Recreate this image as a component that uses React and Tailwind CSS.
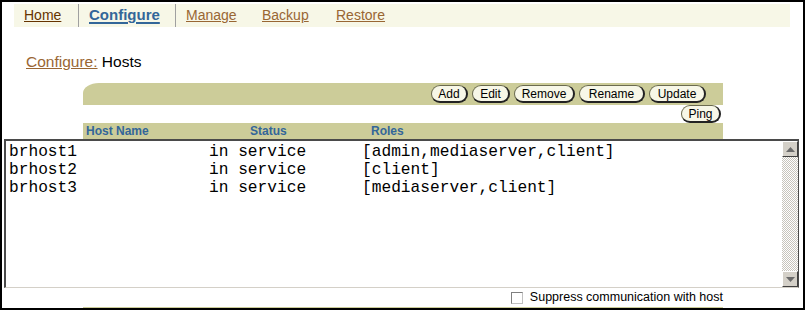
import React from "react";

const hosts = [
  { name: "brhost1", status: "in service", roles: "[admin,mediaserver,client]" },
  { name: "brhost2", status: "in service", roles: "[client]" },
  { name: "brhost3", status: "in service", roles: "[mediaserver,client]" },
];

function PillButton({ label, width }) {
  return (
    <button
      className={`h-[18px] ${width} rounded-full bg-[#f7f7e7] border border-[#6b6b4f] border-r-2 border-b-2 border-r-[#222] border-b-[#222] text-[12px] leading-[14px] text-black flex items-center justify-center`}
    >
      {label}
    </button>
  );
}

function ScrollArrow({ up }) {
  return (
    <div className="w-[16px] h-[16px] bg-[#d4d0c8] border border-t-white border-l-white border-r-[#404040] border-b-[#404040] flex items-center justify-center">
      <svg width="9" height="5" viewBox="0 0 9 5">
        {up ? (
          <polygon points="4.5,0 9,5 0,5" fill="#6a6a6a" />
        ) : (
          <polygon points="0,0 9,0 4.5,5" fill="#6a6a6a" />
        )}
      </svg>
    </div>
  );
}

export default function App() {
  return (
    <div className="w-[805px] h-[310px] border-2 border-black bg-white overflow-hidden font-['Liberation_Sans',Arial,sans-serif] flex flex-col">
      {/* Tab bar */}
      <div className="mt-[2px] ml-[12px] w-[776px] h-[23px] bg-[#f7f7e7] flex items-stretch">
        <span className="ml-[10px] w-[54px] flex items-center text-[14px] text-[#663300] underline">
          Home
        </span>
        <span className="w-px bg-[#a0a0a0]" />
        <span className="ml-[10px] w-[86px] flex items-center text-[15px] font-bold text-[#336699] underline decoration-2 underline-offset-2">
          Configure
        </span>
        <span className="w-px bg-[#a0a0a0]" />
        <span className="ml-[10px] w-[76px] flex items-center text-[14px] text-[#996633] underline">
          Manage
        </span>
        <span className="w-[74px] flex items-center text-[14px] text-[#996633] underline">
          Backup
        </span>
        <span className="flex items-center text-[14px] text-[#996633] underline">
          Restore
        </span>
      </div>

      {/* Breadcrumb */}
      <div className="mt-[25px] ml-[24px] h-[20px] leading-[20px] text-[15.5px]">
        <span className="text-[#996633] underline">Configure:</span>
        <span className="text-black"> Hosts</span>
      </div>

      {/* Action bar */}
      <div className="mt-[11px] ml-[81px] w-[640px]">
        <div className="h-[22px] bg-[#cccc99] rounded-tl-[16px_10px] flex items-center justify-end gap-[4px] pr-[17px]">
          <PillButton label="Add" width="w-[37px]" />
          <PillButton label="Edit" width="w-[38px]" />
          <PillButton label="Remove" width="w-[61px]" />
          <PillButton label="Rename" width="w-[66px]" />
          <PillButton label="Update" width="w-[57px]" />
        </div>
        <div className="h-[18px] flex items-end justify-end pr-[2px]">
          <PillButton label="Ping" width="w-[40px]" />
        </div>
        <div className="h-[16px] bg-[#cccc99] flex items-center pl-[3px] text-[12px] font-bold text-[#336699]">
          <span className="w-[164px]">Host Name</span>
          <span className="w-[121px]">Status</span>
          <span>Roles</span>
        </div>
      </div>

      {/* Host list */}
      <div className="ml-[2px] w-[795px] h-[149px] border-t-2 border-l-2 border-r border-b border-t-[#4a4a4a] border-l-[#4a4a4a] border-r-[#4a4a4a] border-b-[#d4d0c8] flex">
        <div className="flex-1 pl-[3px] pt-[2px] font-['Liberation_Mono','Courier_New',monospace] text-[16.2px] leading-[18px] text-black">
          {hosts.map((h) => (
            <div key={h.name} className="flex whitespace-pre">
              <span className="w-[200px]">{h.name}</span>
              <span className="w-[153px]">{h.status}</span>
              <span>{h.roles}</span>
            </div>
          ))}
        </div>
        <div className="w-[16px] flex flex-col bg-[image:repeating-conic-gradient(#c8c4bc_0%_25%,#ffffff_0%_50%)] bg-[length:2px_2px]">
          <ScrollArrow up />
          <div className="flex-1" />
          <ScrollArrow />
        </div>
      </div>

      {/* Footer */}
      <div className="ml-[81px] w-[640px] h-[19px] flex items-center justify-end gap-[7px] pr-[0px]">
        <span className="w-[12px] h-[12px] border border-t-[#808080] border-l-[#808080] border-r-[#c0c0c0] border-b-[#c0c0c0] bg-white" />
        <span className="text-[12.5px] text-black">Suppress communication with host</span>
      </div>
      <div className="ml-[81px] w-[640px] h-px bg-[#cccc99]" />
    </div>
  );
}
